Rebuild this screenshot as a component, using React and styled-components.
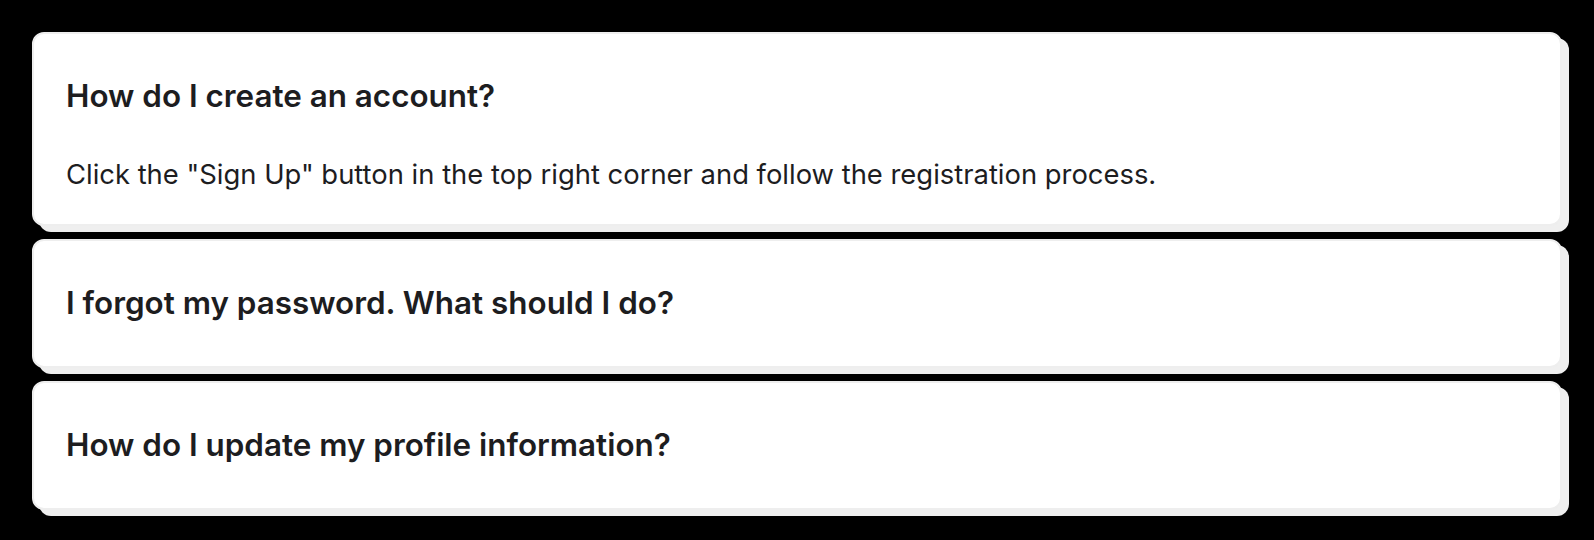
import React, { useState } from 'react';
import styled, { createGlobalStyle } from 'styled-components';

const GlobalStyle = createGlobalStyle`
  html, body {
    margin: 0;
    padding: 0;
    background: #000;
  }
  body {
    font-family: Inter, "Noto Sans", "Liberation Sans", sans-serif;
    -webkit-font-smoothing: antialiased;
  }
`;

const Page = styled.div`
  width: 100%;
  min-height: 540px;
  background: #000;
  padding: 32px 32px 0 32px;
  box-sizing: border-box;
  display: flex;
  flex-direction: column;
  gap: 13px;
`;

const Item = styled.div`
  background: #fff;
  border: 2px solid #eeeeee;
  border-radius: 12px;
  box-shadow: 7px 6px 0 #efefef;
  padding: 0 32px;
  color: #1d1d1f;
`;

const Question = styled.h3`
  margin: 0;
  padding: 45px 0;
  font-size: 31.4px;
  line-height: 35px;
  font-weight: 600;
  cursor: pointer;
`;

const Answer = styled.p`
  margin: -3px 0 0 0;
  padding: 0 0 32px 0;
  font-size: 27.4px;
  line-height: 36px;
  font-weight: 400;
  color: #1d1d1f;
`;

const faqs = [
  {
    q: 'How do I create an account?',
    a: 'Click the "Sign Up" button in the top right corner and follow the registration process.',
  },
  {
    q: 'I forgot my password. What should I do?',
    a: 'Click "Forgot Password" on the login page and follow the instructions sent to your email.',
  },
  {
    q: 'How do I update my profile information?',
    a: 'Go to your account settings and edit the fields you want to change.',
  },
];

const App = () => {
  const [open, setOpen] = useState(0);
  return (
    <>
      <GlobalStyle />
      <Page>
        {faqs.map((item, i) => (
          <Item key={item.q}>
            <Question onClick={() => setOpen(open === i ? -1 : i)}>{item.q}</Question>
            {open === i && <Answer>{item.a}</Answer>}
          </Item>
        ))}
      </Page>
    </>
  );
};

export default App;
